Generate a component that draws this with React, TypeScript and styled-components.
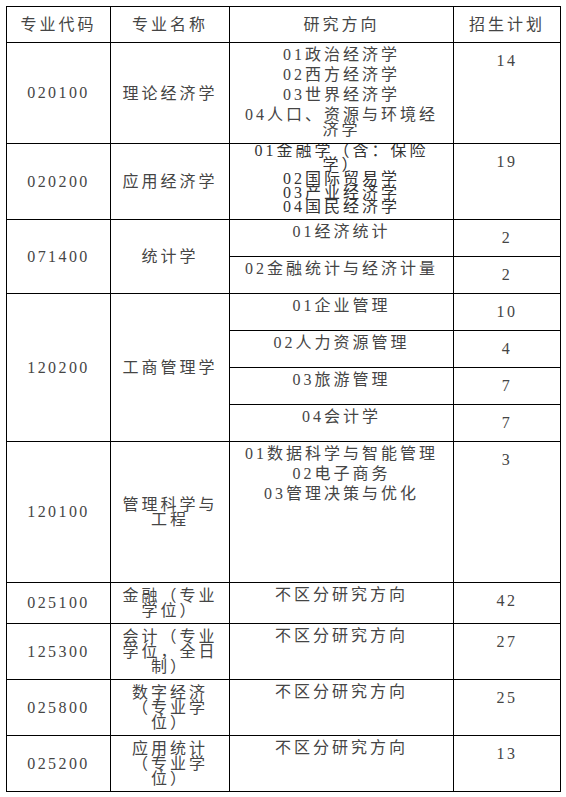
import React from 'react';
import styled, { createGlobalStyle } from 'styled-components';

const GlobalStyle = createGlobalStyle`
  html, body {
    margin: 0;
    padding: 0;
    background: #ffffff;
  }
`;

interface IDirection {
  lines: string[];
  count: string;
  height: number;
}

interface IMajor {
  code: string;
  name: string;
  tight?: boolean;
  directions: IDirection[];
}

const majors: IMajor[] = [
  {
    code: '020100',
    name: '理论经济学',
    directions: [
      {
        lines: ['01政治经济学', '02西方经济学', '03世界经济学', '04人口、资源与环境经济学'],
        count: '14',
        height: 101,
      },
    ],
  },
  {
    code: '020200',
    name: '应用经济学',
    tight: true,
    directions: [
      {
        lines: ['01金融学（含：保险学）', '02国际贸易学', '03产业经济学', '04国民经济学'],
        count: '19',
        height: 76,
      },
    ],
  },
  {
    code: '071400',
    name: '统计学',
    directions: [
      { lines: ['01经济统计'], count: '2', height: 37 },
      { lines: ['02金融统计与经济计量'], count: '2', height: 37 },
    ],
  },
  {
    code: '120200',
    name: '工商管理学',
    directions: [
      { lines: ['01企业管理'], count: '10', height: 37 },
      { lines: ['02人力资源管理'], count: '4', height: 37 },
      { lines: ['03旅游管理'], count: '7', height: 37 },
      { lines: ['04会计学'], count: '7', height: 37 },
    ],
  },
  {
    code: '120100',
    name: '管理科学与工程',
    directions: [
      {
        lines: ['01数据科学与智能管理', '02电子商务', '03管理决策与优化'],
        count: '3',
        height: 141,
      },
    ],
  },
  {
    code: '025100',
    name: '金融（专业学位）',
    directions: [{ lines: ['不区分研究方向'], count: '42', height: 41 }],
  },
  {
    code: '125300',
    name: '会计（专业学位，全日制）',
    directions: [{ lines: ['不区分研究方向'], count: '27', height: 56 }],
  },
  {
    code: '025800',
    name: '数字经济（专业学位）',
    directions: [{ lines: ['不区分研究方向'], count: '25', height: 56 }],
  },
  {
    code: '025200',
    name: '应用统计（专业学位）',
    directions: [{ lines: ['不区分研究方向'], count: '13', height: 56 }],
  },
];

const Page = styled.div`
  padding: 6px 0 0 6px;
  font-family: 'Liberation Serif', 'Noto Sans CJK SC', serif;
  font-size: 16px;
  color: #454545;
  letter-spacing: 3px;
`;

const Table = styled.table`
  border-collapse: collapse;
  table-layout: fixed;
  width: 555px;
`;

const Row = styled.tr<{ height: number }>`
  height: ${({ height }): string => `${height}px`};
`;

const HeadCell = styled.th`
  border: 1px solid #000;
  font-weight: normal;
  text-align: center;
  vertical-align: middle;
  padding: 0;
  line-height: 16px;
`;

const CodeCell = styled.td`
  border: 1px solid #000;
  text-align: center;
  vertical-align: middle;
  padding: 0;
  letter-spacing: 2.4px;
`;

const NameCell = styled.td`
  border: 1px solid #000;
  text-align: center;
  vertical-align: middle;
  padding: 0 8px;
  line-height: 15px;
`;

const DirectionCell = styled.td<{ tight?: boolean }>`
  border: 1px solid #000;
  text-align: center;
  vertical-align: top;
  padding: ${({ tight }): string => (tight ? '0 12px' : '4px 12px 0')};
  overflow: hidden;
`;

const Lines = styled.div<{ tight?: boolean }>`
  display: flex;
  flex-direction: column;
  gap: ${({ tight }): string => (tight ? '0px' : '5px')};
  line-height: ${({ tight }): string => (tight ? '14px' : '15px')};
  max-height: ${({ tight }): string => (tight ? '72px' : 'none')};
  color: ${({ tight }): string => (tight ? '#333' : 'inherit')};
`;

const CountCell = styled.td`
  border: 1px solid #000;
  text-align: center;
  vertical-align: top;
  padding: 8px 0 0;
  line-height: 20px;
  letter-spacing: 2.4px;
`;

const App: React.FC = () => {
  return (
    <Page>
      <GlobalStyle />
      <Table>
        <colgroup>
          <col style={{ width: 104 }} />
          <col style={{ width: 119 }} />
          <col style={{ width: 224 }} />
          <col style={{ width: 107 }} />
        </colgroup>
        <thead>
          <Row height={36}>
            <HeadCell>专业代码</HeadCell>
            <HeadCell>专业名称</HeadCell>
            <HeadCell>研究方向</HeadCell>
            <HeadCell>招生计划</HeadCell>
          </Row>
        </thead>
        <tbody>
          {majors.map((major) =>
            major.directions.map((dir, i) => (
              <Row key={`${major.code}-${i}`} height={dir.height}>
                {i === 0 ? (
                  <>
                    <CodeCell rowSpan={major.directions.length}>{major.code}</CodeCell>
                    <NameCell rowSpan={major.directions.length}>{major.name}</NameCell>
                  </>
                ) : null}
                <DirectionCell tight={major.tight}>
                  <Lines tight={major.tight}>
                    {dir.lines.map((line) => (
                      <span key={line}>{line}</span>
                    ))}
                  </Lines>
                </DirectionCell>
                <CountCell>{dir.count}</CountCell>
              </Row>
            )),
          )}
        </tbody>
      </Table>
    </Page>
  );
};

export default App;
